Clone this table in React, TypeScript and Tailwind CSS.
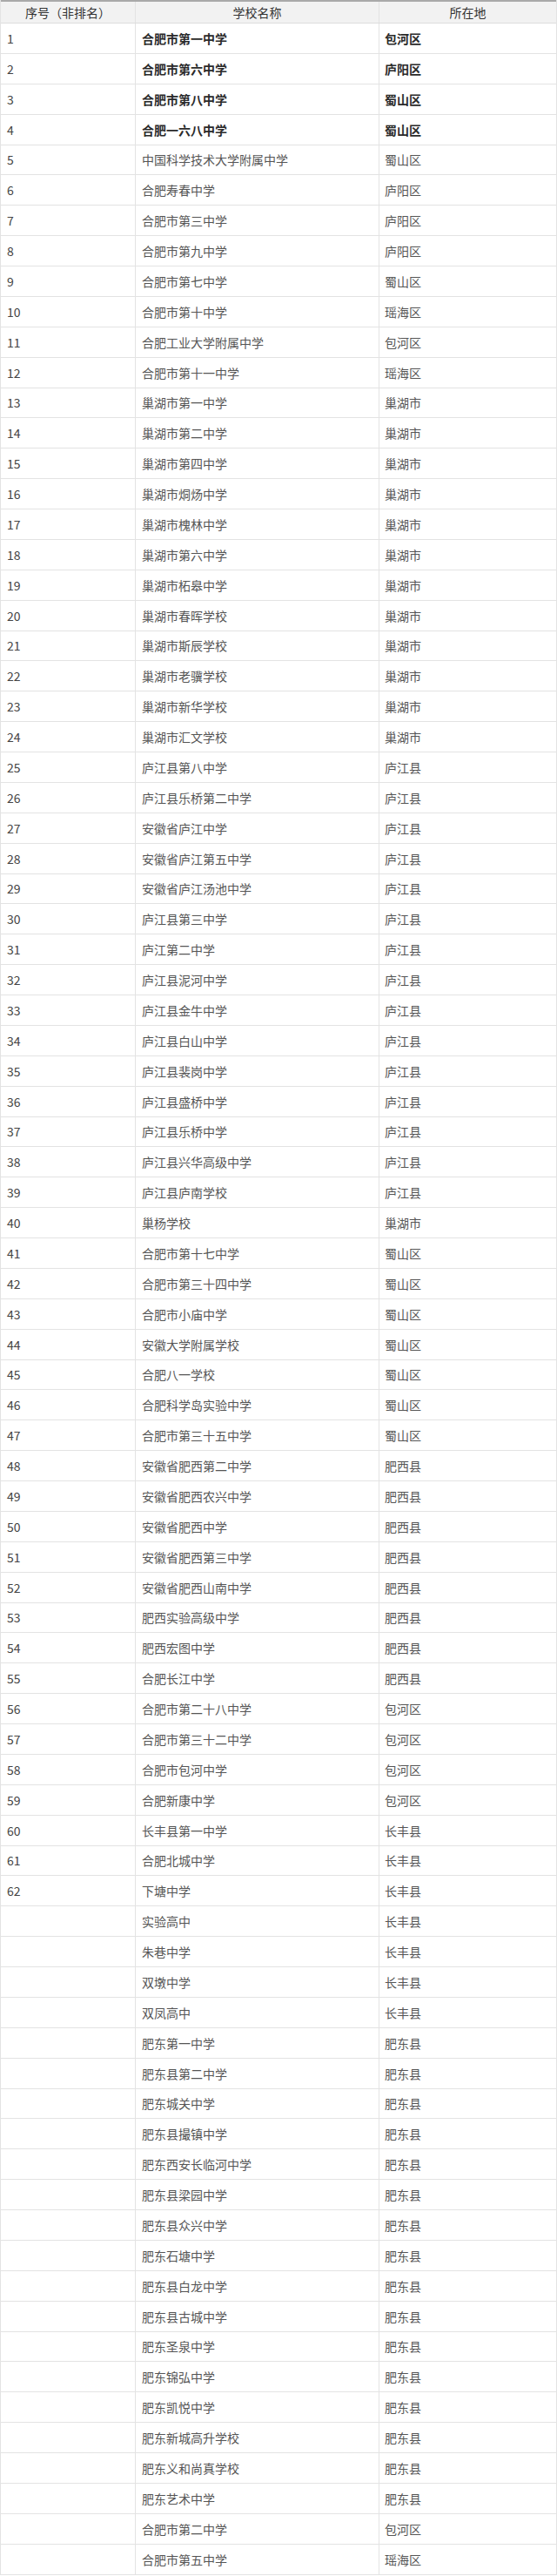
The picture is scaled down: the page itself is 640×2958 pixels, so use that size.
import React from "react";

type Row = { n?: number; name: string; area: string; bold?: boolean };

const rows: Row[] = [
  { n: 1, name: "合肥市第一中学", area: "包河区", bold: true },
  { n: 2, name: "合肥市第六中学", area: "庐阳区", bold: true },
  { n: 3, name: "合肥市第八中学", area: "蜀山区", bold: true },
  { n: 4, name: "合肥一六八中学", area: "蜀山区", bold: true },
  { n: 5, name: "中国科学技术大学附属中学", area: "蜀山区" },
  { n: 6, name: "合肥寿春中学", area: "庐阳区" },
  { n: 7, name: "合肥市第三中学", area: "庐阳区" },
  { n: 8, name: "合肥市第九中学", area: "庐阳区" },
  { n: 9, name: "合肥市第七中学", area: "蜀山区" },
  { n: 10, name: "合肥市第十中学", area: "瑶海区" },
  { n: 11, name: "合肥工业大学附属中学", area: "包河区" },
  { n: 12, name: "合肥市第十一中学", area: "瑶海区" },
  { n: 13, name: "巢湖市第一中学", area: "巢湖市" },
  { n: 14, name: "巢湖市第二中学", area: "巢湖市" },
  { n: 15, name: "巢湖市第四中学", area: "巢湖市" },
  { n: 16, name: "巢湖市烔炀中学", area: "巢湖市" },
  { n: 17, name: "巢湖市槐林中学", area: "巢湖市" },
  { n: 18, name: "巢湖市第六中学", area: "巢湖市" },
  { n: 19, name: "巢湖市柘皋中学", area: "巢湖市" },
  { n: 20, name: "巢湖市春晖学校", area: "巢湖市" },
  { n: 21, name: "巢湖市斯辰学校", area: "巢湖市" },
  { n: 22, name: "巢湖市老骥学校", area: "巢湖市" },
  { n: 23, name: "巢湖市新华学校", area: "巢湖市" },
  { n: 24, name: "巢湖市汇文学校", area: "巢湖市" },
  { n: 25, name: "庐江县第八中学", area: "庐江县" },
  { n: 26, name: "庐江县乐桥第二中学", area: "庐江县" },
  { n: 27, name: "安徽省庐江中学", area: "庐江县" },
  { n: 28, name: "安徽省庐江第五中学", area: "庐江县" },
  { n: 29, name: "安徽省庐江汤池中学", area: "庐江县" },
  { n: 30, name: "庐江县第三中学", area: "庐江县" },
  { n: 31, name: "庐江第二中学", area: "庐江县" },
  { n: 32, name: "庐江县泥河中学", area: "庐江县" },
  { n: 33, name: "庐江县金牛中学", area: "庐江县" },
  { n: 34, name: "庐江县白山中学", area: "庐江县" },
  { n: 35, name: "庐江县裴岗中学", area: "庐江县" },
  { n: 36, name: "庐江县盛桥中学", area: "庐江县" },
  { n: 37, name: "庐江县乐桥中学", area: "庐江县" },
  { n: 38, name: "庐江县兴华高级中学", area: "庐江县" },
  { n: 39, name: "庐江县庐南学校", area: "庐江县" },
  { n: 40, name: "巢杨学校", area: "巢湖市" },
  { n: 41, name: "合肥市第十七中学", area: "蜀山区" },
  { n: 42, name: "合肥市第三十四中学", area: "蜀山区" },
  { n: 43, name: "合肥市小庙中学", area: "蜀山区" },
  { n: 44, name: "安徽大学附属学校", area: "蜀山区" },
  { n: 45, name: "合肥八一学校", area: "蜀山区" },
  { n: 46, name: "合肥科学岛实验中学", area: "蜀山区" },
  { n: 47, name: "合肥市第三十五中学", area: "蜀山区" },
  { n: 48, name: "安徽省肥西第二中学", area: "肥西县" },
  { n: 49, name: "安徽省肥西农兴中学", area: "肥西县" },
  { n: 50, name: "安徽省肥西中学", area: "肥西县" },
  { n: 51, name: "安徽省肥西第三中学", area: "肥西县" },
  { n: 52, name: "安徽省肥西山南中学", area: "肥西县" },
  { n: 53, name: "肥西实验高级中学", area: "肥西县" },
  { n: 54, name: "肥西宏图中学", area: "肥西县" },
  { n: 55, name: "合肥长江中学", area: "肥西县" },
  { n: 56, name: "合肥市第二十八中学", area: "包河区" },
  { n: 57, name: "合肥市第三十二中学", area: "包河区" },
  { n: 58, name: "合肥市包河中学", area: "包河区" },
  { n: 59, name: "合肥新康中学", area: "包河区" },
  { n: 60, name: "长丰县第一中学", area: "长丰县" },
  { n: 61, name: "合肥北城中学", area: "长丰县" },
  { n: 62, name: "下塘中学", area: "长丰县" },
  { name: "实验高中", area: "长丰县" },
  { name: "朱巷中学", area: "长丰县" },
  { name: "双墩中学", area: "长丰县" },
  { name: "双凤高中", area: "长丰县" },
  { name: "肥东第一中学", area: "肥东县" },
  { name: "肥东县第二中学", area: "肥东县" },
  { name: "肥东城关中学", area: "肥东县" },
  { name: "肥东县撮镇中学", area: "肥东县" },
  { name: "肥东西安长临河中学", area: "肥东县" },
  { name: "肥东县梁园中学", area: "肥东县" },
  { name: "肥东县众兴中学", area: "肥东县" },
  { name: "肥东石塘中学", area: "肥东县" },
  { name: "肥东县白龙中学", area: "肥东县" },
  { name: "肥东县古城中学", area: "肥东县" },
  { name: "肥东圣泉中学", area: "肥东县" },
  { name: "肥东锦弘中学", area: "肥东县" },
  { name: "肥东凯悦中学", area: "肥东县" },
  { name: "肥东新城高升学校", area: "肥东县" },
  { name: "肥东义和尚真学校", area: "肥东县" },
  { name: "肥东艺术中学", area: "肥东县" },
  { name: "合肥市第二中学", area: "包河区" },
  { name: "合肥市第五中学", area: "瑶海区" },
];

export default function App() {
  return (
    <div
      className="w-[640px] bg-white text-[14px]"
      style={{ fontFamily: '"Noto Sans CJK SC", "Noto Sans", sans-serif' }}
    >
      <div className="border-l border-r border-[#e3e3e3]">
        <div className="grid grid-cols-[155px_280px_1fr] h-[27px] bg-[#f2f2f2] border-t-2 border-t-[#a9a9a9] border-b border-b-[#dcdcdc] text-[#333] leading-none">
          <div className="flex items-center justify-center border-r border-[#e3e3e3]">序号（非排名）</div>
          <div className="flex items-center justify-center border-r border-[#e3e3e3]">学校名称</div>
          <div className="flex items-center justify-center">所在地</div>
        </div>
        {rows.map((r, i) => (
          <div
            key={i}
            className={`grid grid-cols-[155px_280px_1fr] h-[34.88px] border-b border-[#e3e3e3] leading-none ${
              r.bold ? "font-bold text-[#2a2a2a]" : "text-[#555]"
            }`}
          >
            <div className="flex items-center pl-[7px] border-r border-[#e3e3e3] font-normal text-[#444]">
              {r.n ?? ""}
            </div>
            <div className="flex items-center pl-[7px] border-r border-[#e3e3e3]">{r.name}</div>
            <div className="flex items-center pl-[6px]">{r.area}</div>
          </div>
        ))}
      </div>
    </div>
  );
}
